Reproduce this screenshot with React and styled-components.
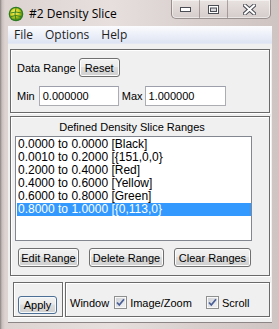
import React from "react";
import styled, { createGlobalStyle } from "styled-components";

const GlobalStyle = createGlobalStyle`
  html, body {
    margin: 0;
    padding: 0;
    background: #cfc6c4;
  }
  * {
    box-sizing: border-box;
  }
`;

const ranges = [
  "0.0000 to 0.0000 [Black]",
  "0.0010 to 0.2000 [{151,0,0}",
  "0.2000 to 0.4000 [Red]",
  "0.4000 to 0.6000 [Yellow]",
  "0.6000 to 0.8000 [Green]",
  "0.8000 to 1.0000 [{0,113,0}",
];

const Window = styled.div`
  width: 279px;
  height: 329px;
  display: flex;
  flex-direction: column;
  background: linear-gradient(
      90deg,
      #8a8282 0px,
      #c9bfbd 2px,
      #ddd4d2 5px,
      #e6dfdd 40%,
      #d9d0ce 70%,
      #cfc4c2 100%
    );
  font-family: "Liberation Sans", Arial, sans-serif;
  font-size: 11px;
  color: #000;
  overflow: hidden;
`;

const TitleBar = styled.div`
  height: 28px;
  display: flex;
  align-items: flex-start;
  padding-left: 8px;
`;

const AppIcon = styled.svg`
  width: 16px;
  height: 16px;
  margin-top: 6px;
`;

const Title = styled.div`
  margin-top: 6px;
  margin-left: 5px;
  font-family: "Open Sans", "Liberation Sans", sans-serif;
  font-size: 12px;
  line-height: 16px;
  flex: 1;
`;

const Captions = styled.div`
  display: flex;
  margin-right: 8px;
  border: 1px solid rgba(60, 50, 50, 0.45);
  border-top: none;
  border-radius: 0 0 5px 5px;
  overflow: hidden;
  background: linear-gradient(#e8e2e1, #d5cdcb);
  box-shadow: inset 0 0 0 1px rgba(255, 255, 255, 0.5);
`;

const CapButton = styled.div`
  width: ${p => p.$w}px;
  height: 18px;
  display: flex;
  align-items: center;
  justify-content: center;
  border-left: ${p => (p.$first ? "none" : "1px solid rgba(60, 50, 50, 0.35)")};
`;

const Client = styled.div`
  margin: 0 7px 6px 8px;
  flex: 1;
  display: flex;
  flex-direction: column;
  background: #f0f0f0;
  border-bottom: 1px solid #8c8686;
`;

const MenuBar = styled.div`
  height: 18px;
  display: flex;
  align-items: center;
  background: linear-gradient(#fbfcfe, #dee4f3);
  border-bottom: 1px solid #e4e8f2;
  font-family: "Open Sans", "Liberation Sans", sans-serif;
  font-size: 12px;
  color: #1e1e1e;
  padding-left: 6px;
`;

const MenuItem = styled.span`
  margin-right: 12px;
`;

const Body = styled.div`
  padding: 5px 2px 5px 2px;
  display: flex;
  flex-direction: column;
  gap: 3px;
`;

const Group = styled.div`
  border: 1px solid #6a6a6a;
  box-shadow: inset 1px 1px 0 #fff, 1px 1px 0 #fff;
`;

const DataGroup = styled(Group)`
  height: 64px;
  padding: 8px 6px 0 6px;
  display: flex;
  flex-direction: column;
  gap: 9px;
`;

const Row = styled.div`
  display: flex;
  align-items: center;
  gap: ${p => p.$gap || 0}px;
`;

const Label = styled.span`
  margin-right: ${p => p.$mr || 0}px;
  margin-left: ${p => p.$ml || 0}px;
  white-space: nowrap;
`;

const Button = styled.div`
  height: ${p => p.$h || 19}px;
  width: ${p => p.$w}px;
  display: flex;
  align-items: center;
  justify-content: center;
  border: 1px solid #707070;
  border-radius: 3px;
  background: linear-gradient(#f2f2f2 0%, #ebebeb 45%, #dddddd 50%, #cfcfcf 100%);
  box-shadow: inset 0 0 0 1px #fcfcfc;
  white-space: nowrap;
`;

const ApplyButton = styled(Button)`
  border-color: #4d6f95;
  box-shadow: inset 0 0 0 1px #f6f9fc;
`;

const Input = styled.div`
  width: ${p => p.$w}px;
  height: 20px;
  border: 1px solid #abadb3;
  border-top-color: #9da0aa;
  background: #fff;
  padding-left: 3px;
  display: flex;
  align-items: center;
`;

const RangesGroup = styled(Group)`
  height: 160px;
  padding: 3px 17px 0 4px;
  display: flex;
  flex-direction: column;
`;

const Heading = styled.div`
  text-align: center;
  height: 16px;
  line-height: 15px;
  padding-right: 3px;
`;

const ListBox = styled.div`
  height: 105px;
  border: 1px solid #828790;
  background: #fff;
  padding: 1px 0 0 1px;
  font-size: 12px;
`;

const ListItem = styled.div`
  height: 13px;
  line-height: 13px;
  padding-left: 1px;
  white-space: nowrap;
  overflow: hidden;
  background: ${p => (p.$selected ? "#3399ff" : "transparent")};
  color: ${p => (p.$selected ? "#fff" : "#000")};
`;

const ButtonRow = styled.div`
  display: flex;
  gap: 10px;
  margin-top: 7px;
  padding-left: 3px;
`;

const BottomRow = styled.div`
  display: flex;
  gap: 2px;
  margin-top: 3px;
  padding-left: 3px;
  height: 35px;
`;

const ApplyGroup = styled(Group)`
  width: 50px;
  padding: 13px 0 0 4px;
`;

const WindowGroup = styled(Group)`
  flex: 1;
  display: flex;
  align-items: center;
  padding: 6px 0 0 4px;
`;

const Check = styled.label`
  display: flex;
  align-items: center;
  gap: 3px;
  margin-left: ${p => p.$ml || 0}px;
`;

const Box = styled.svg`
  width: 13px;
  height: 13px;
`;

const CheckBox = () => (
  <Box viewBox="0 0 13 13">
    <defs>
      <linearGradient id="cbg" x1="0" y1="0" x2="1" y2="1">
        <stop offset="0" stopColor="#cbcfd5" />
        <stop offset="1" stopColor="#f6f6f6" />
      </linearGradient>
    </defs>
    <rect x="0.5" y="0.5" width="12" height="12" fill="#fff" stroke="#8e8f8f" />
    <rect x="2" y="2" width="9" height="9" fill="url(#cbg)" stroke="#ddd" strokeWidth="0.5" />
    <path d="M3 6.5 L5.3 9 L10 3.3" fill="none" stroke="#4a5f97" strokeWidth="1.8" />
  </Box>
);

const Glyph = styled.svg`
  display: block;
`;

export default function App() {
  return (
    <>
      <GlobalStyle />
      <Window>
        <TitleBar>
          <AppIcon viewBox="0 0 16 16">
            <defs>
              <radialGradient id="ig" cx="0.4" cy="0.35" r="0.7">
                <stop offset="0" stopColor="#f7f07a" />
                <stop offset="0.5" stopColor="#d4d21c" />
                <stop offset="1" stopColor="#3d8a1e" />
              </radialGradient>
            </defs>
            <circle cx="8" cy="8" r="7.3" fill="#2d7a21" />
            <circle cx="8" cy="8" r="6" fill="url(#ig)" />
            <path d="M2.5 7 Q8 5 13.5 7 M3 10.5 Q8 8.5 13 10.5 M8 2 Q6 8 8 14" stroke="#2d7a21" strokeWidth="0.9" fill="none" />
          </AppIcon>
          <Title>#2 Density Slice</Title>
          <Captions>
            <CapButton $w={27} $first>
              <Glyph width="11" height="5" viewBox="0 0 11 5">
                <rect x="0.5" y="0.5" width="10" height="4" fill="#fff" stroke="#4b4d55" />
              </Glyph>
            </CapButton>
            <CapButton $w={28}>
              <Glyph width="11" height="9" viewBox="0 0 11 9">
                <rect x="0.5" y="0.5" width="10" height="8" fill="#fff" stroke="#4b4d55" />
                <rect x="2.5" y="3" width="6" height="3.5" fill="#d8d8dc" stroke="#4b4d55" />
              </Glyph>
            </CapButton>
            <CapButton $w={43}>
              <Glyph width="13" height="11" viewBox="0 0 13 11">
                <path d="M2 1.5 L11 9.5 M11 1.5 L2 9.5" stroke="#4b4d55" strokeWidth="4" strokeLinecap="square" />
                <path d="M2 1.5 L11 9.5 M11 1.5 L2 9.5" stroke="#fff" strokeWidth="2" strokeLinecap="square" />
              </Glyph>
            </CapButton>
          </Captions>
        </TitleBar>
        <Client>
          <MenuBar>
            <MenuItem>File</MenuItem>
            <MenuItem>Options</MenuItem>
            <MenuItem>Help</MenuItem>
          </MenuBar>
          <Body>
            <DataGroup>
              <Row $gap={3}>
                <Label>Data Range</Label>
                <Button $w={41} $h={19}>Reset</Button>
              </Row>
              <Row>
                <Label $mr={4}>Min</Label>
                <Input $w={80}>0.000000</Input>
                <Label $ml={3} $mr={2}>Max</Label>
                <Input $w={81}>1.000000</Input>
              </Row>
            </DataGroup>
            <RangesGroup>
              <Heading>Defined Density Slice Ranges</Heading>
              <ListBox>
                {ranges.map((r, i) => (
                  <ListItem key={r} $selected={i === ranges.length - 1}>
                    {r}
                  </ListItem>
                ))}
              </ListBox>
              <ButtonRow>
                <Button $w={61}>Edit Range</Button>
                <Button $w={75}>Delete Range</Button>
                <Button $w={77}>Clear Ranges</Button>
              </ButtonRow>
            </RangesGroup>
            <BottomRow>
              <ApplyGroup>
                <ApplyButton $w={39} $h={18}>Apply</ApplyButton>
              </ApplyGroup>
              <WindowGroup>
                <Label>Window</Label>
                <Check $ml={5}>
                  <CheckBox />
                  Image/Zoom
                </Check>
                <Check $ml={14}>
                  <CheckBox />
                  Scroll
                </Check>
              </WindowGroup>
            </BottomRow>
          </Body>
        </Client>
      </Window>
    </>
  );
}
